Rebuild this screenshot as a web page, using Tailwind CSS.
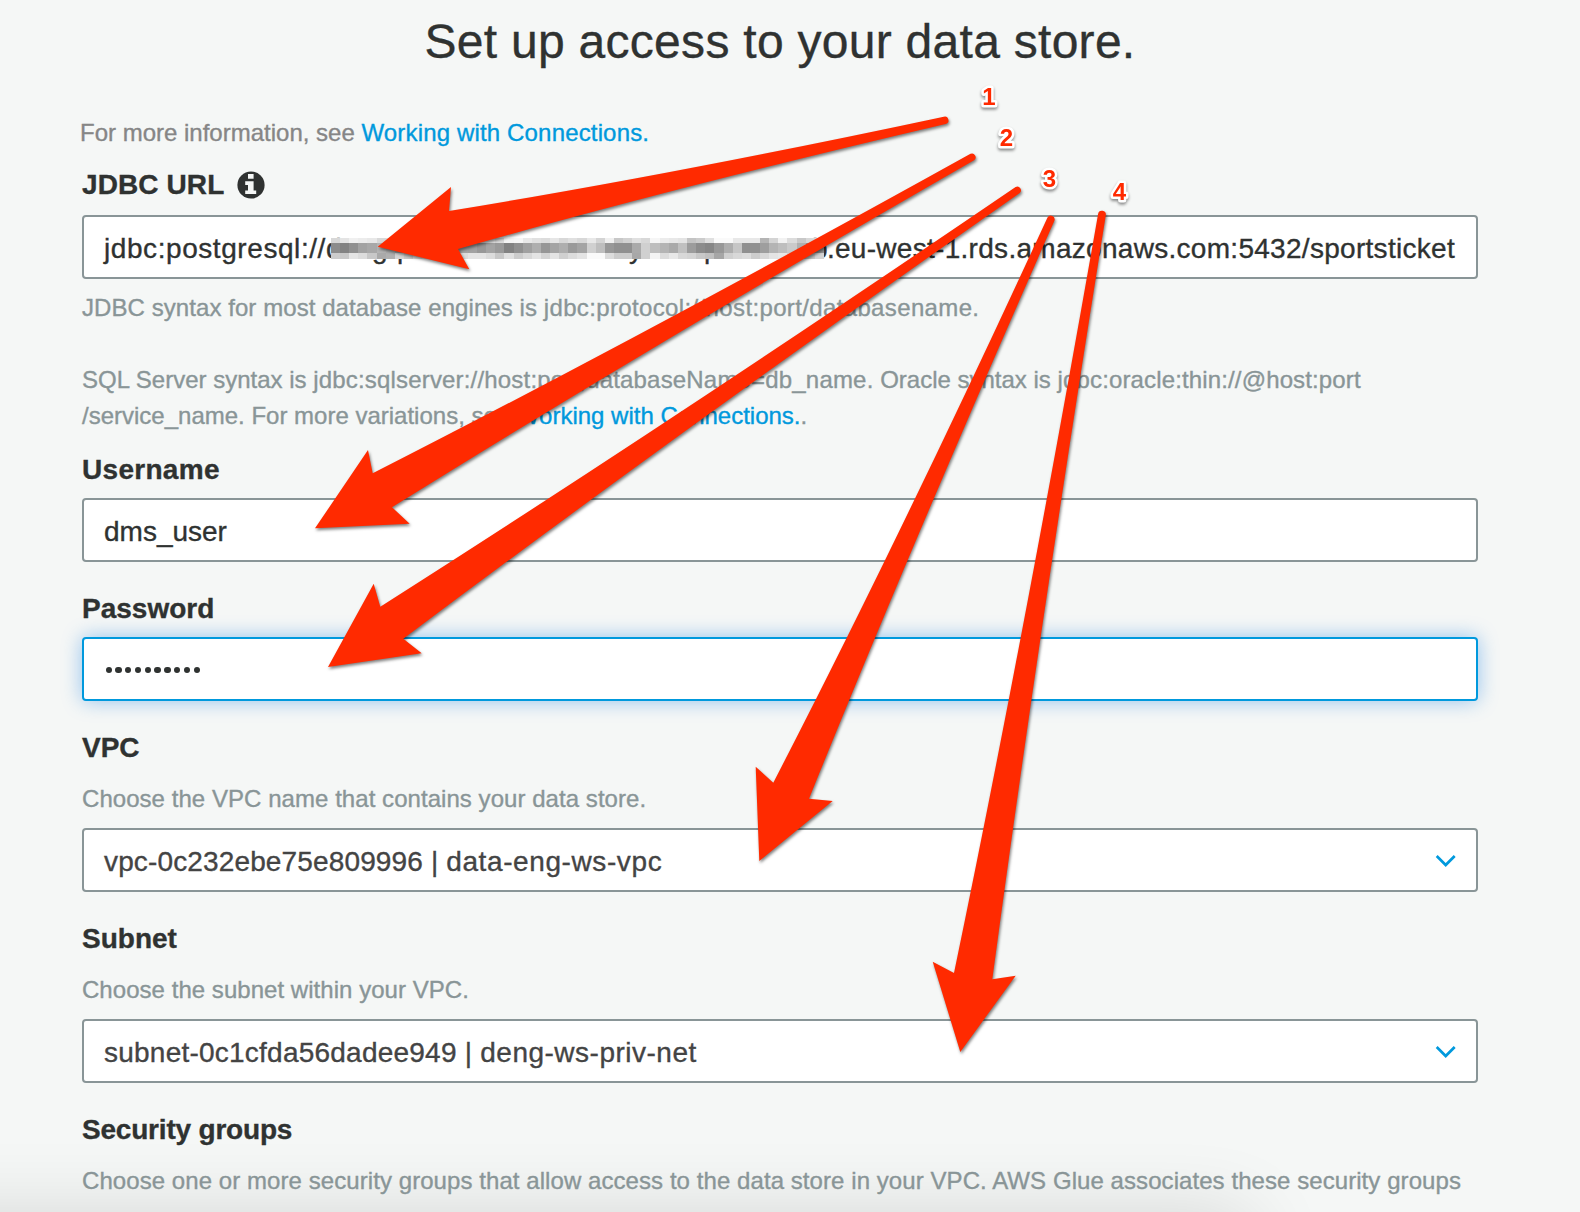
<!DOCTYPE html>
<html lang="en">
<head>
<meta charset="utf-8">
<title>Set up access to your data store</title>
<script src="https://cdn.jsdelivr.net/npm/@tailwindcss/browser@4"></script>
</head>
<body class="bg-[#f5f7f6] overflow-hidden">
<div class="relative w-[1580px] h-[1212px] overflow-hidden bg-[#f5f7f6] font-['Liberation_Sans',sans-serif] text-[#2f3231] whitespace-nowrap">
  <!-- shadow of the panel below the fold -->
  <div class="absolute -left-[100px] top-[1216px] w-[1350px] h-[200px] shadow-[0_0_80px_rgba(0,0,0,0.14)]"></div>

  <main class="relative flex flex-col pt-[12px] pl-[82px] w-[1478px] [-webkit-text-stroke:0.35px_currentColor]">
    <h1 class="text-[48px] leading-[60px] tracking-[0.28px] text-center">Set up access to your data store.</h1>
    <p class="mt-[43px] -ml-[2px] text-[24px] leading-[36px] text-[#868686]">For more information, see <a class="text-[#0099dd] tracking-[0.16px]">Working with Connections.</a></p>

    <div class="mt-[14px] flex items-center h-[40px]">
      <label class="text-[28px] leading-[40px] font-bold tracking-[0.1px]">JDBC URL</label>
      <svg class="ml-[13px] w-[28px] h-[28px]" viewBox="0 0 28 28"><circle cx="14" cy="14" r="13.6" fill="#2f3231"/><path d="M11 3h5.6v4.8H11zM8.200 10.300h8.400v9.200h2.600v3.600H8.200v-3.600h2.800v-5.400H8.200z" fill="#f5f7f6"/></svg>
    </div>
    <div class="mt-[10px] h-[64px] border-2 border-[#899597] rounded-[4px] bg-white px-[20px] pt-[3px] flex items-center text-[28px]">
      <span class="tracking-[0.57px]">jdbc:postgresql://</span>
      <span class="relative block w-[501px] h-[40px] shrink-0">
        <span class="absolute left-0 top-0 leading-[40px]">d</span>
        <span class="absolute left-[46px] top-0 leading-[40px]">g</span>
        <span class="absolute left-[71px] top-0 leading-[40px]">p</span>
        <span class="absolute left-[303px] top-0 leading-[40px]">y</span>
        <span class="absolute left-[378px] top-0 leading-[40px]">p</span>
        <span class="absolute left-[486px] top-0 leading-[40px]">b</span>
        <span id="mosaic" class="absolute left-[5px] top-[9px] w-[493px] h-[21px] grid grid-cols-[repeat(54,minmax(0,1fr))] grid-rows-[5px_10px_6px]"></span>
      </span>
      <span class="tracking-[0.29px]">.eu-west-1.rds.amazonaws.com:5432/sportsticket</span>
    </div>
    <p class="mt-[11px] text-[24px] leading-[36px] text-[#899597]"><span class="tracking-[0.07px]">JDBC syntax for most database engines is </span><span class="tracking-[0.36px]">jdbc:protocol://host:port/databasename.</span><br><br>SQL Server syntax is <span class="tracking-[0.18px]">jdbc:sqlserver://host:port;databaseName=db_name.</span> Oracle syntax is <span class="tracking-[0.14px]">jdbc:oracle:thin://@host:port</span><br>/service_name. For more variations, see <a class="text-[#0099dd]">Working with Connections.</a>.</p>

    <label class="mt-[16px] text-[28px] leading-[40px] font-bold tracking-[0.3px]">Username</label>
    <div class="mt-[8px] h-[64px] border-2 border-[#899597] rounded-[4px] bg-white px-[20px] pt-[3px] flex items-center text-[28px]">dms_user</div>

    <label class="mt-[27px] text-[28px] leading-[40px] font-bold">Password</label>
    <div class="mt-[8px] h-[64px] border-2 border-[#0099dd] rounded-[4px] bg-white pl-[21.500px] pt-[2px] flex items-center gap-[3.4px] shadow-[0_0_20px_rgba(0,115,225,0.4)]">
      <i class="size-[6.4px] rounded-full bg-[#2f3231]"></i><i class="size-[6.4px] rounded-full bg-[#2f3231]"></i><i class="size-[6.4px] rounded-full bg-[#2f3231]"></i><i class="size-[6.4px] rounded-full bg-[#2f3231]"></i><i class="size-[6.4px] rounded-full bg-[#2f3231]"></i><i class="size-[6.4px] rounded-full bg-[#2f3231]"></i><i class="size-[6.4px] rounded-full bg-[#2f3231]"></i><i class="size-[6.4px] rounded-full bg-[#2f3231]"></i><i class="size-[6.4px] rounded-full bg-[#2f3231]"></i><i class="size-[6.4px] rounded-full bg-[#2f3231]"></i>
    </div>

    <label class="mt-[27px] text-[28px] leading-[40px] font-bold">VPC</label>
    <p class="mt-[13px] text-[24px] leading-[36px] tracking-[0.05px] text-[#899597]">Choose the VPC name that contains your data store.</p>
    <div class="mt-[11px] h-[64px] border-2 border-[#899597] rounded-[4px] bg-white pl-[20px] pr-[19px] flex items-center justify-between text-[28px] text-[#444]">
      <span class="pt-[3px]"><span class="tracking-[0.14px]">vpc-0c232ebe75e809996 | </span><span class="tracking-[0.6px]">data-eng-ws-vpc</span></span>
      <svg class="w-[22px] h-[14px] mt-[2px]" viewBox="0 0 22 14" fill="none" stroke="#0099dd" stroke-width="2.7"><path d="M1.700 2l9 9 9-9"/></svg>
    </div>

    <label class="mt-[27px] text-[28px] leading-[40px] font-bold">Subnet</label>
    <p class="mt-[13px] text-[24px] leading-[36px] tracking-[0.04px] text-[#899597]">Choose the subnet within your VPC.</p>
    <div class="mt-[11px] h-[64px] border-2 border-[#899597] rounded-[4px] bg-white pl-[20px] pr-[19px] flex items-center justify-between text-[28px] text-[#444]">
      <span class="pt-[3px]"><span class="tracking-[0.23px]">subnet-0c1cfda56dadee949 | </span><span class="tracking-[0.5px]">deng-ws-priv-net</span></span>
      <svg class="w-[22px] h-[14px] mt-[2px]" viewBox="0 0 22 14" fill="none" stroke="#0099dd" stroke-width="2.7"><path d="M1.700 2l9 9 9-9"/></svg>
    </div>

    <label class="mt-[27px] text-[28px] leading-[40px] tracking-[-0.2px] font-bold">Security groups</label>
    <p class="mt-[13px] text-[24px] leading-[36px] tracking-[0.068px] text-[#899597]">Choose one or more security groups that allow access to the data store in your VPC. AWS Glue associates these security groups</p>
  </main>

  <!-- annotation arrows and step numbers -->
  <svg class="absolute inset-0 w-[1580px] h-[1212px]" viewBox="0 0 1580 1212">
    <g fill="#ff2a00" class="drop-shadow-[1px_2px_1.5px_rgba(0,0,0,0.5)]">
      <path d="M377.700 246.700L451 187L449 211Q672.800 174.500 943.800 116.700A3.700 3.700 0 0 1 945.600 124Q676 187 458 249L469.300 269.300Z"/>
      <path d="M315 528.300L368 450L372.700 473.300Q644.500 334.800 970.500 153.800A3.700 3.700 0 0 1 974.100 160.200Q650.800 345.900 392 507.300L409.700 523.700Z"/>
      <path d="M328 667L373.700 583.700L380.300 606.700Q669.500 422.800 1015.600 187A3.700 3.700 0 0 1 1019.800 193Q677.200 433.200 403.300 638.700L421.700 653.300Z"/>
      <path d="M759.300 861L755.700 766.700L773.300 782.700Q903 531.400 1047.500 217.400A3.900 3.900 0 0 1 1054.500 220.600Q914.900 536.600 809 798.700L832.700 801Z"/>
      <path d="M960.300 1052L932.700 961.700L954 973Q1024.700 632.600 1098.100 214A3.900 3.900 0 0 1 1105.800 215.300Q1038.500 634.700 992.300 979.300L1015.700 975.700Z"/>
    </g>
    <g class="font-bold text-[24px] drop-shadow-[0_2px_1.5px_rgba(0,0,0,0.45)]" fill="#ff2a00" stroke="#fff" stroke-width="5" stroke-linejoin="round" paint-order="stroke" text-anchor="middle">
      <text x="989" y="105">1</text><text x="1006.500" y="146">2</text><text x="1049.500" y="187">3</text><text x="1119.500" y="200">4</text>
    </g>
  </svg>
</div>
<script>
  // grey levels (00-ff) of the redaction mosaic, one row per line
  const rows = [
    'd8 e4 f0 ec e8 d8 dd d6 e8 ee e6 e6 e8 e8 e8 e0 ea e8 dc f4 f6 e8 e0 dc e6 d8 e0 d8 e8 d4 f0 c8 d2 e0 d8 f6 ec e8 e4 c4 cc e0 fa fa e8 e8 e8 b4 d4 f2 dc c8 d8 dc',
    '8c 82 90 a2 a8 b4 ae a6 a2 a8 b0 ac a8 a6 a4 a2 98 a4 9a 82 90 a0 ae 96 a4 ae 9a a4 d0 be 98 90 90 aa d0 be b4 aa c0 9c 8c 86 98 ae c6 90 90 9e b4 be ca b0 90 98',
    'cc c8 e4 dc c8 aa b0 d4 c8 dc e4 e4 e0 e4 dc e4 e4 dc c8 e0 cc d8 e4 d4 e4 d0 dc e4 fa fa dc cc cc a8 d0 f4 dc e8 d8 d4 c8 c0 a6 d0 d8 dc cc d8 e4 e8 d8 c4 c8 d4'
  ];
  document.getElementById('mosaic').innerHTML = rows.join(' ').split(' ')
    .map(h => `<i style="background:#${h}${h}${h}"></i>`).join('');
</script>
</body>
</html>
